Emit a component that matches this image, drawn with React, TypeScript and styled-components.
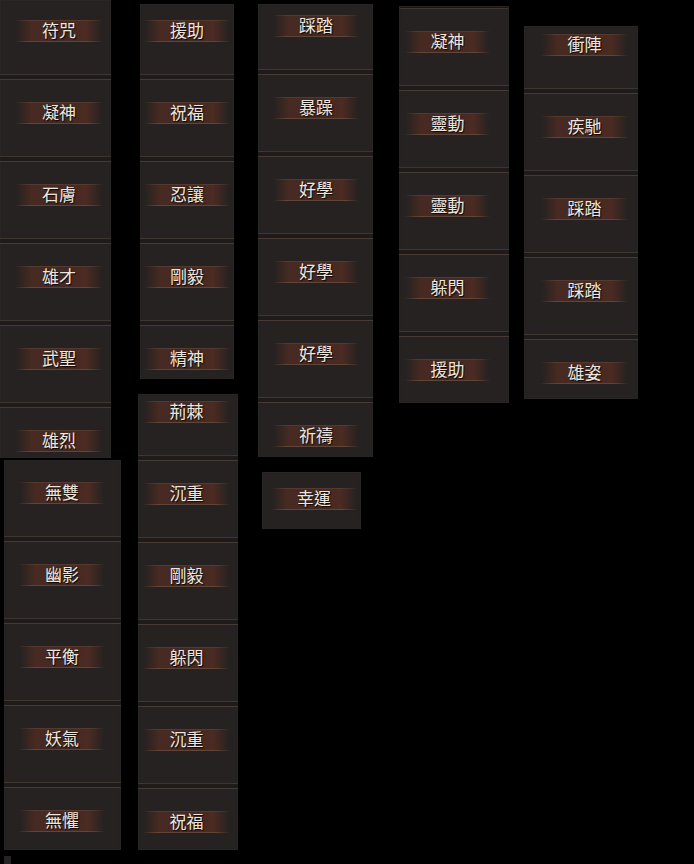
import React from "react";
import styled, { createGlobalStyle } from "styled-components";

const GlobalStyle = createGlobalStyle`
  html, body {
    margin: 0;
    background: #000;
  }
  body {
    overflow-x: hidden;
    font-family: "Noto Sans CJK TC", "Noto Sans CJK SC", sans-serif;
  }
`;

const Board = styled.main`
  display: grid;
  grid-template-columns: 138fr 120fr 141fr 125fr 170fr;
  align-items: start;
  background: #000;
`;

const Column = styled.div<{ $top: number; $right: number; $gap: number }>`
  display: flex;
  flex-direction: column;
  gap: ${(p) => p.$gap}px;
  padding: ${(p) => p.$top}px ${(p) => p.$right}px 0 0;
`;

interface StripProps {
  $pad: [number, number];
  $inset: [number, number];
  $margin: [number, number];
  $topRule?: boolean;
}

const Strip = styled.ul<StripProps>`
  list-style: none;
  margin: 0 ${(p) => p.$margin[1]}px 0 ${(p) => p.$margin[0]}px;
  padding: ${(p) => p.$pad[0]}px 0 ${(p) => p.$pad[1]}px;
  background: ${(p) =>
    p.$topRule
      ? "linear-gradient(#1a1616 0 2px, #40372f 2px 3px, transparent 3px), #252221"
      : "#252221"};
  box-shadow: inset 0 0 1px 1px #2a2726;

  & > li {
    padding: 0 ${(p) => p.$inset[1]}px 0 ${(p) => p.$inset[0]}px;
  }

  & > li + li::before {
    content: "";
    display: block;
    height: 4px;
    margin: 32px -${(p) => p.$inset[1]}px 22px -${(p) => p.$inset[0]}px;
    border-top: 1px solid #3e3630;
    border-bottom: 1px solid #443b33;
    background: #1e1b1a;
  }
`;

const Item = styled.li`
  display: block;
`;

const Plaque = styled.span`
  display: block;
  box-sizing: border-box;
  height: 22px;
  line-height: 20px;
  font-size: 17px;
  text-align: center;
  white-space: nowrap;
  color: #ebe6df;
  text-shadow: 1px 1px 1px #0b0706;
  background:
    linear-gradient(90deg, transparent, #553a2f 18%, #553a2f 82%, transparent) top / 100% 1px no-repeat,
    linear-gradient(90deg, transparent, #604638 18%, #604638 82%, transparent) bottom / 100% 1px no-repeat,
    linear-gradient(90deg, transparent 2%, #482a22 20%, #432924 50%, #4b2b22 80%, transparent 98%);
`;

const Stub = styled.div`
  width: 7px;
  height: 8px;
  margin: 6px 0 0 4px;
  background: #252324;
`;

interface StripData {
  names: string[];
  pad: [number, number];
  inset: [number, number];
  margin?: [number, number];
  topRule?: boolean;
}

interface ColumnData {
  top: number;
  right: number;
  gap?: number;
  strips: StripData[];
}

const columns: ColumnData[] = [
  {
    top: 0,
    right: 17,
    gap: 2,
    strips: [
      { names: ["符咒", "凝神", "石膚", "雄才", "武聖", "雄烈"], pad: [20, 6], inset: [14, 7], margin: [0, 10] },
      { names: ["無雙", "幽影", "平衡", "妖氣", "無懼"], pad: [22, 18], inset: [14, 15], margin: [4, 0] },
    ],
  },
  {
    top: 4,
    right: 20,
    gap: 15,
    strips: [
      { names: ["援助", "祝福", "忍讓", "剛毅", "精神"], pad: [16, 9], inset: [3, 3], margin: [2, 4] },
      { names: ["荊棘", "沉重", "剛毅", "躲閃", "沉重", "祝福"], pad: [7, 17], inset: [4, 7] },
    ],
  },
  {
    top: 4,
    right: 26,
    gap: 15,
    strips: [
      { names: ["踩踏", "暴躁", "好學", "好學", "好學", "祈禱"], pad: [11, 10], inset: [14, 13] },
      { names: ["幸運"], pad: [16, 19], inset: [8, 3], margin: [4, 12] },
    ],
  },
  {
    top: 6,
    right: 15,
    strips: [
      { names: ["凝神", "靈動", "靈動", "躲閃", "援助"], pad: [25, 22], inset: [5, 18], topRule: true },
    ],
  },
  {
    top: 26,
    right: 56,
    strips: [
      { names: ["衝陣", "疾馳", "踩踏", "踩踏", "雄姿"], pad: [8, 15], inset: [16, 9] },
    ],
  },
];

export default function App() {
  return (
    <>
      <GlobalStyle />
      <Board>
        {columns.map((column, c) => (
          <Column key={c} $top={column.top} $right={column.right} $gap={column.gap ?? 0}>
            {column.strips.map((strip, s) => (
              <Strip
                key={s}
                $pad={strip.pad}
                $inset={strip.inset}
                $margin={strip.margin ?? [0, 0]}
                $topRule={strip.topRule}
              >
                {strip.names.map((name, n) => (
                  <Item key={n}>
                    <Plaque>{name}</Plaque>
                  </Item>
                ))}
              </Strip>
            ))}
          </Column>
        ))}
      </Board>
      <Stub />
    </>
  );
}
